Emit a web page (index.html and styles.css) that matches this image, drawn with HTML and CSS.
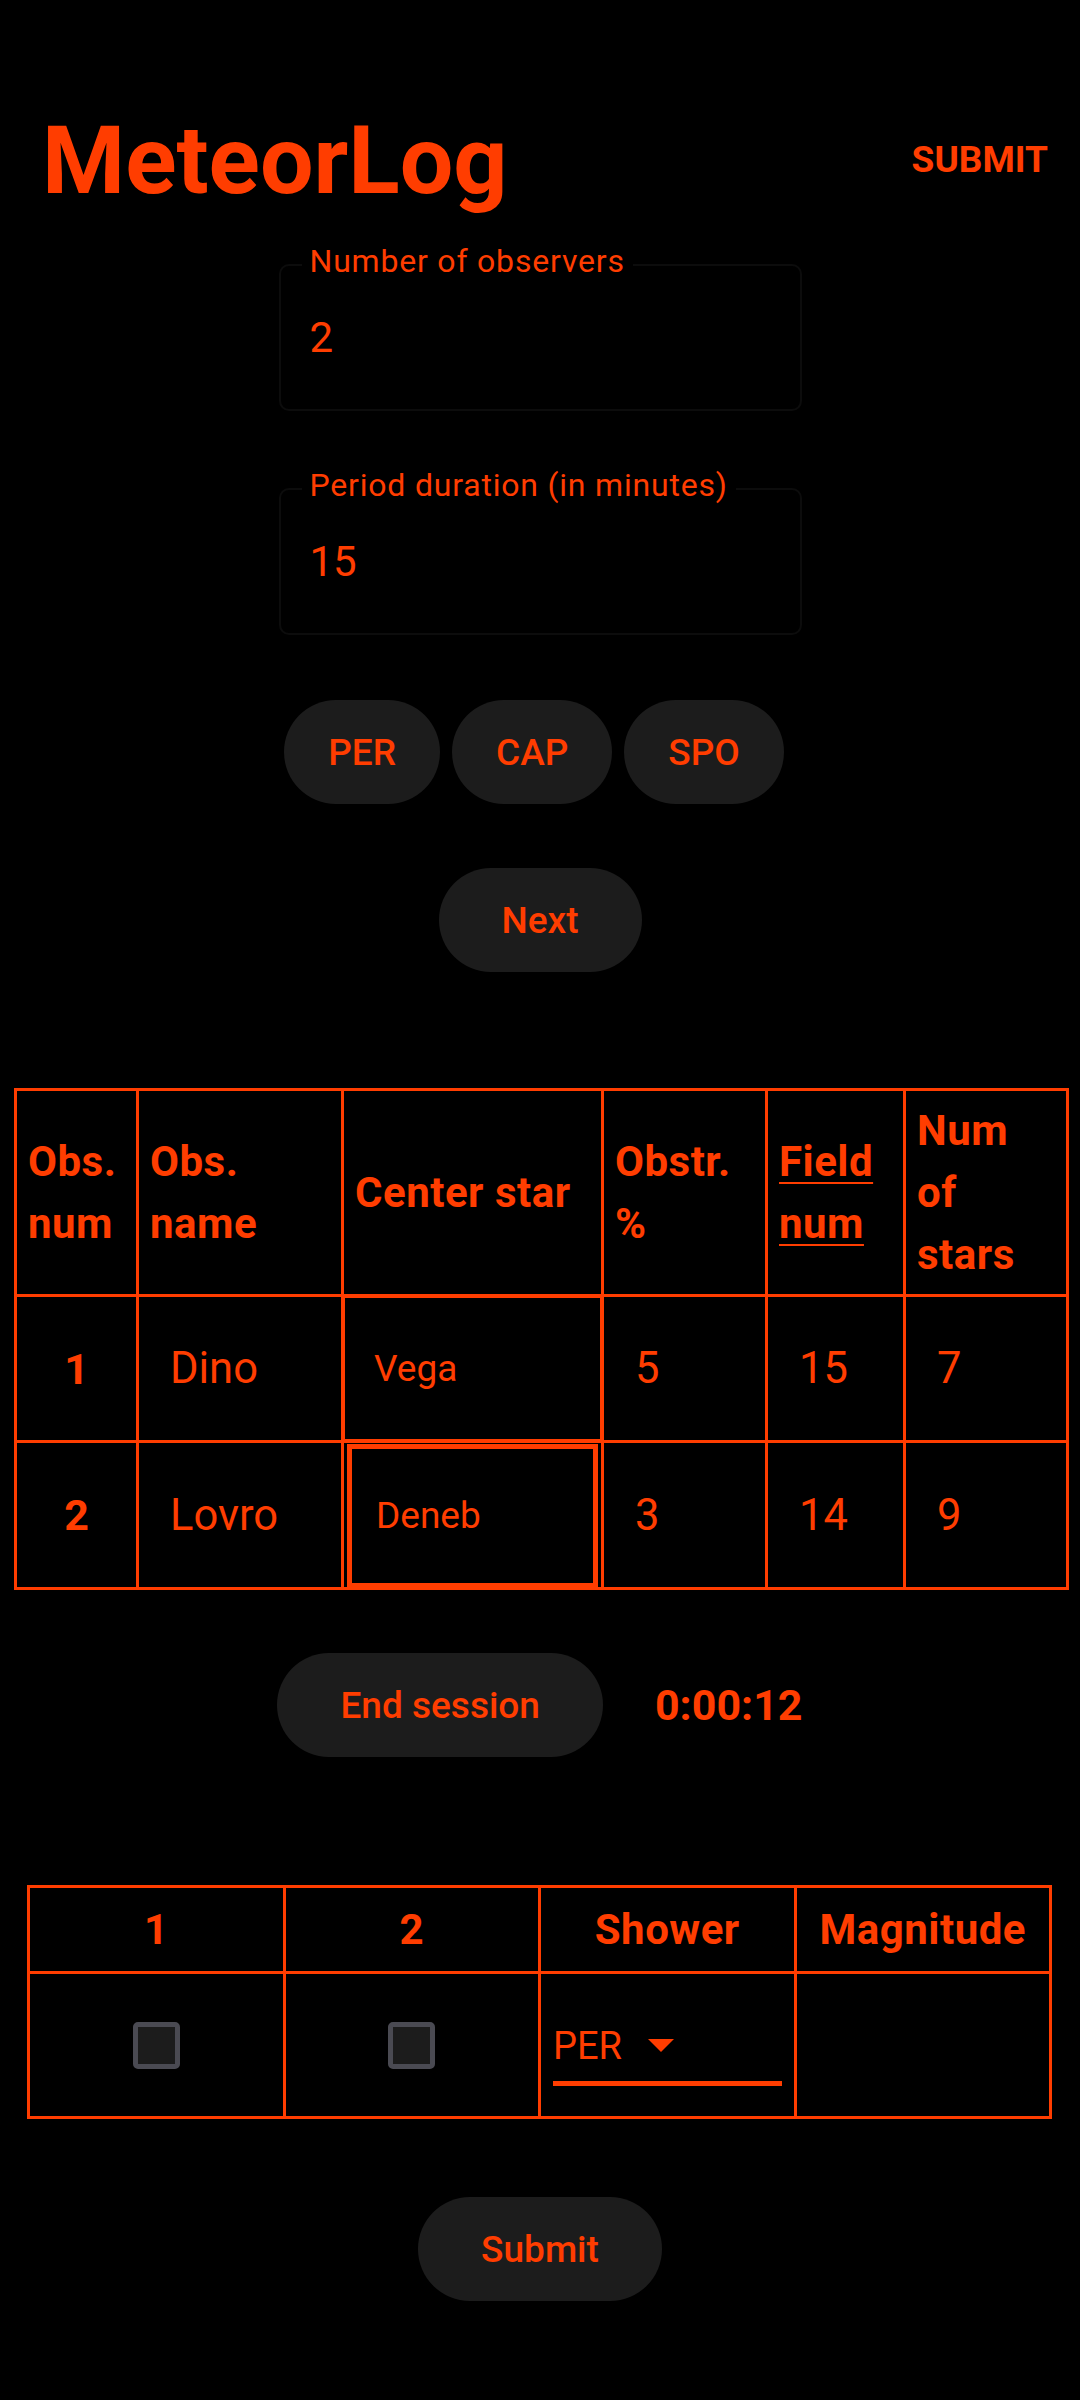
FILE: index.html
```html
<!DOCTYPE html>
<html lang="en">
<head>
<meta charset="utf-8">
<title>MeteorLog</title>
<link rel="stylesheet" href="styles.css">
</head>
<body>
<header class="appbar">
  <h1 class="title">MeteorLog</h1>
  <button class="action">SUBMIT</button>
</header>
<main class="page">
  <div class="field field-first">
    <span class="field-label">Number of observers</span>
    <span class="field-value">2</span>
  </div>
  <div class="field field-second">
    <span class="field-label">Period duration (in minutes)</span>
    <span class="field-value">15</span>
  </div>

  <div class="chips">
    <button class="btn chip">PER</button>
    <button class="btn chip">CAP</button>
    <button class="btn chip">SPO</button>
  </div>

  <div class="center-row next-row">
    <button class="btn btn-wide">Next</button>
  </div>

  <table class="obs">
    <colgroup>
      <col class="c-num"><col class="c-name"><col class="c-star"><col class="c-obstr"><col class="c-field"><col class="c-stars">
    </colgroup>
    <thead>
      <tr class="obs-head">
        <th>Obs. num</th>
        <th>Obs. name</th>
        <th>Center star</th>
        <th>Obstr. %</th>
        <th><span class="link">Field num</span></th>
        <th>Num of stars</th>
      </tr>
    </thead>
    <tbody>
      <tr class="obs-row">
        <td class="num">1</td>
        <td class="val">Dino</td>
        <td class="star"><div class="star-input">Vega</div></td>
        <td class="val">5</td>
        <td class="val">15</td>
        <td class="val">7</td>
      </tr>
      <tr class="obs-row obs-row-2">
        <td class="num">2</td>
        <td class="val">Lovro</td>
        <td class="star"><div class="star-input focused">Deneb</div></td>
        <td class="val">3</td>
        <td class="val">14</td>
        <td class="val">9</td>
      </tr>
    </tbody>
  </table>

  <div class="session">
    <button class="btn btn-wide">End session</button>
    <span class="timer">0:00:12</span>
  </div>

  <table class="meteors">
    <thead>
      <tr class="met-head">
        <th>1</th>
        <th>2</th>
        <th>Shower</th>
        <th>Magnitude</th>
      </tr>
    </thead>
    <tbody>
      <tr class="met-row">
        <td><span class="checkbox"></span></td>
        <td><span class="checkbox"></span></td>
        <td class="shower">
          <div class="dropdown"><span>PER</span><span class="caret"></span></div>
        </td>
        <td></td>
      </tr>
    </tbody>
  </table>

  <div class="center-row submit-row">
    <button class="btn btn-wide">Submit</button>
  </div>
</main>
</body>
</html>
```

FILE: styles.css
```css
html, body {
  margin: 0;
  padding: 0;
  background: #000;
}

body {
  width: 1080px;
  min-height: 2400px;
  font-family: Roboto, "Noto Sans", sans-serif;
  color: #ff3d00;
}

button {
  font-family: inherit;
}

/* ---------- app bar ---------- */
.appbar {
  display: flex;
  justify-content: space-between;
  align-items: flex-start;
  padding: 106px 32px 0 42px;
}

.title {
  margin: 0;
  font-size: 95px;
  font-weight: 700;
  line-height: 110px;
}

.action {
  margin-top: 32px;
  padding: 0;
  border: none;
  background: none;
  color: #ff3d00;
  font-size: 37px;
  font-weight: 700;
  line-height: 44px;
}

/* ---------- text fields ---------- */
.field {
  position: relative;
  box-sizing: border-box;
  width: 523px;
  height: 147px;
  margin: 0 auto;
  border: 2px solid #0c0c0c;
  border-radius: 10px;
  padding: 47px 0 0 29px;
}

.field-first {
  margin-top: 48px;
}

.field-second {
  margin-top: 77px;
}

.field-label {
  position: absolute;
  top: -21px;
  left: 21px;
  padding: 0 8px;
  background: #000;
  font-size: 32px;
  line-height: 32px;
  letter-spacing: 0.8px;
}

.field-value {
  display: block;
  font-size: 42px;
  line-height: 50px;
}

/* ---------- buttons ---------- */
.btn {
  height: 104px;
  border: none;
  border-radius: 52px;
  background: #1c1c1c;
  color: #ff3d00;
  font-size: 37px;
  font-weight: 500;
  padding: 0 44px;
}

.btn-wide {
  padding: 0 63px;
}

.chips {
  display: flex;
  justify-content: center;
  margin-top: 65px;
}

.chip {
  margin-right: 12px;
}

.center-row {
  display: flex;
  justify-content: center;
}

.next-row {
  margin-top: 64px;
}

/* ---------- observers table ---------- */
.obs {
  border-collapse: collapse;
  table-layout: fixed;
  width: 1052px;
  margin: 116px 0 0 14px;
}

.c-num { width: 122px; }
.c-name { width: 205px; }
.c-star { width: 260px; }
.c-obstr { width: 164px; }
.c-field { width: 138px; }
.c-stars { width: 163px; }

.obs th,
.obs td {
  border: 3px solid #ff3d00;
  padding: 0;
}

.obs-head {
  height: 206px;
}

.obs th {
  text-align: left;
  vertical-align: middle;
  font-size: 42px;
  font-weight: 700;
  line-height: 62px;
  letter-spacing: 0.5px;
  padding: 0 21px 0 11px;
}

.link {
  text-decoration: underline;
  text-decoration-thickness: 2px;
  text-underline-offset: 6px;
}

.obs-row {
  height: 146px;
}

.obs-row-2 {
  height: 147px;
}

.obs td.num {
  text-align: center;
  font-size: 43px;
  font-weight: 700;
}

.obs td.val {
  font-size: 43.5px;
  font-weight: 400;
  padding-left: 31px;
}

.obs td.star {
  padding: 0;
  height: 1px;
}

.star-input {
  box-sizing: border-box;
  height: 100%;
  min-height: 140px;
  display: flex;
  align-items: center;
  padding-left: 29px;
  border: 1px solid #ff3d00;
  font-size: 37px;
}

.star-input.focused {
  margin: 4px 3px 3px 3px;
  min-height: 133px;
  border: 5px solid #ff3d00;
  padding-left: 24px;
}

/* ---------- session row ---------- */
.session {
  display: flex;
  justify-content: center;
  align-items: center;
  gap: 52px;
  margin-top: 63px;
}

.timer {
  font-size: 43px;
  font-weight: 700;
}

/* ---------- meteors table ---------- */
.meteors {
  border-collapse: collapse;
  table-layout: fixed;
  width: 1025px;
  margin: 128px 0 0 27px;
}

.meteors th,
.meteors td {
  border: 3px solid #ff3d00;
  padding: 0;
  width: 25%;
  text-align: center;
  vertical-align: middle;
}

.met-head {
  height: 86px;
}

.meteors th {
  font-size: 42px;
  font-weight: 700;
  letter-spacing: 0.5px;
}

.met-row {
  height: 145px;
}

.checkbox {
  display: inline-block;
  box-sizing: border-box;
  width: 47px;
  height: 47px;
  border: 5px solid #4a4a52;
  border-radius: 5px;
  background: #1c1c1c;
  vertical-align: middle;
}

.meteors td.shower {
  text-align: left;
  padding: 0 12px 0 12px;
}

.dropdown {
  display: flex;
  align-items: center;
  gap: 26px;
  height: 70px;
  margin-top: 6px;
  border-bottom: 5px solid #ff3d00;
  font-size: 38px;
  font-weight: 400;
}

.caret {
  width: 0;
  height: 0;
  border-left: 13px solid transparent;
  border-right: 13px solid transparent;
  border-top: 13px solid #ff3d00;
}

.submit-row {
  margin-top: 78px;
}
```
